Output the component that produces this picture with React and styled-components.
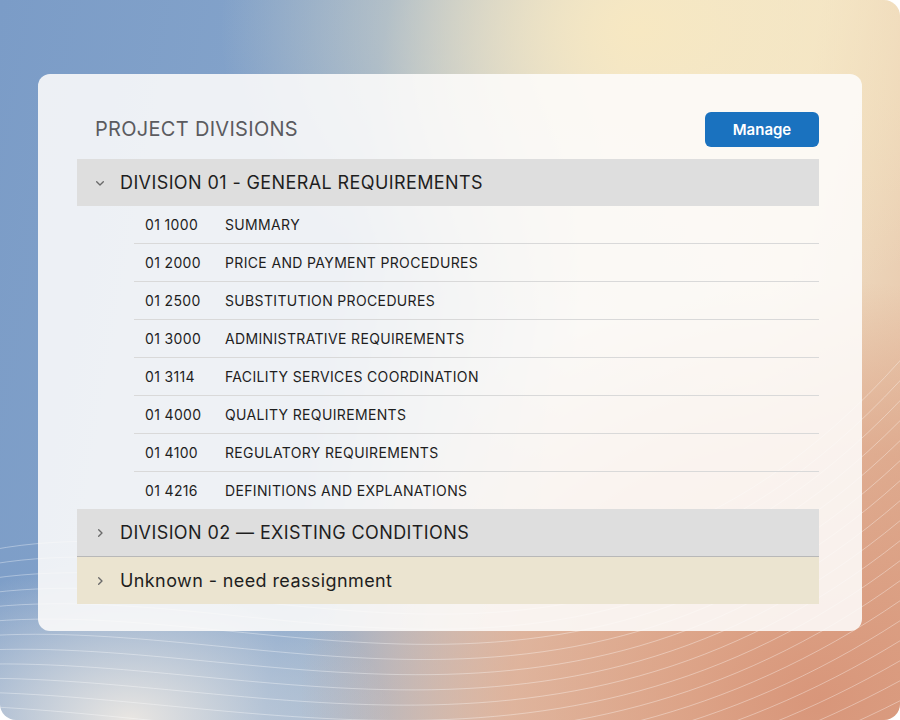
import React from "react";
import styled, { createGlobalStyle } from "styled-components";

const Global = createGlobalStyle`
  html, body { margin: 0; padding: 0; }
  body { font-family: Inter, "Noto Sans", sans-serif; }
`;

const Page = styled.div`
  position: relative;
  width: 900px;
  height: 720px;
  overflow: hidden;
  border-radius: 0 16px 16px 16px;
  background:
    radial-gradient(ellipse 420px 300px at 640px 30px, #f7e8c2 0%, rgba(247,232,194,0) 100%),
    radial-gradient(ellipse 520px 420px at 820px 700px, #d8967a 0%, rgba(216,150,122,0.6) 60%, rgba(216,150,122,0) 100%),
    radial-gradient(ellipse 260px 160px at 130px 720px, #e9e6e2 0%, rgba(233,230,226,0) 100%),
    linear-gradient(100deg, #7b9cc7 0%, #86a5cb 38%, #e9e2d2 62%, #f1e3c8 80%, #e6c2a6 100%);
  padding: 74px 38px 0;
  box-sizing: border-box;
`;

const Waves = styled.svg`
  position: absolute;
  inset: 0;
  pointer-events: none;
`;

const Card = styled.div`
  position: relative;
  height: 557px;
  border-radius: 12px;
  background: rgba(253, 252, 250, 0.88);
  padding: 37px 43px 0 39px;
  box-sizing: border-box;
`;

const Header = styled.div`
  display: flex;
  align-items: center;
  justify-content: space-between;
  padding-left: 18px;
  height: 36px;
  margin-bottom: 12px;
`;

const Title = styled.h2`
  margin: 0;
  font-size: 20px;
  font-weight: 400;
  color: #5b5b5f;
  letter-spacing: 0.3px;
`;

const Button = styled.button`
  width: 114px;
  height: 35px;
  border: none;
  border-radius: 6px;
  background: #1a72bf;
  color: #fff;
  font-family: inherit;
  font-size: 15px;
  font-weight: 600;
`;

const GroupRow = styled.div`
  display: flex;
  align-items: center;
  height: 47px;
  background: ${(p) => p.$bg || "#dedede"};
  border-bottom: ${(p) => (p.$line ? "1px solid #b8b8b8" : "none")};
  color: #1e1e1e;
  font-size: 18px;
  letter-spacing: 0.4px;
  padding-left: 15px;
  gap: 12px;
`;

const Chevron = styled.svg`
  width: 16px;
  height: 16px;
  color: #6a6a6a;
`;

const Item = styled.div`
  display: flex;
  align-items: center;
  height: 37px;
  margin-left: 57px;
  padding-left: 11px;
  font-size: 14px;
  letter-spacing: 0.35px;
  color: #1e1e1e;
  border-bottom: ${(p) => (p.$last ? "none" : "1px solid #d9d9d9")};
`;

const Code = styled.span`
  width: 80px;
`;

const Down = () => (
  <Chevron viewBox="0 0 24 24" fill="none" stroke="currentColor" strokeWidth="2" strokeLinecap="round" strokeLinejoin="round">
    <path d="M7 10l5 5 5-5" />
  </Chevron>
);
const Right = () => (
  <Chevron viewBox="0 0 24 24" fill="none" stroke="currentColor" strokeWidth="2" strokeLinecap="round" strokeLinejoin="round">
    <path d="M10 7l5 5-5 5" />
  </Chevron>
);

const items = [
  ["01 1000", "SUMMARY"],
  ["01 2000", "PRICE AND PAYMENT PROCEDURES"],
  ["01 2500", "SUBSTITUTION PROCEDURES"],
  ["01 3000", "ADMINISTRATIVE REQUIREMENTS"],
  ["01 3114", "FACILITY SERVICES COORDINATION"],
  ["01 4000", "QUALITY REQUIREMENTS"],
  ["01 4100", "REGULATORY REQUIREMENTS"],
  ["01 4216", "DEFINITIONS AND EXPLANATIONS"],
];

const wavePaths = Array.from({ length: 22 }, (_, i) => {
  const o = i * 22;
  return `M${-50} ${560 + o * 0.6} C 250 ${470 + o}, 600 ${760 + o * 0.3}, 950 ${300 + o}`;
});

export default function App() {
  return (
    <>
      <Global />
      <Page>
        <Waves width="900" height="720">
          {wavePaths.map((d, i) => (
            <path key={i} d={d} fill="none" stroke="rgba(255,255,255,0.35)" strokeWidth="1" />
          ))}
        </Waves>
        <Card>
          <Header>
            <Title>PROJECT DIVISIONS</Title>
            <Button>Manage</Button>
          </Header>
          <GroupRow>
            <Down />
            DIVISION 01 - GENERAL REQUIREMENTS
          </GroupRow>
          {items.map(([c, n], i) => (
            <Item key={c} $last={i === items.length - 1}>
              <Code>{c}</Code>
              {n}
            </Item>
          ))}
          <GroupRow $line>
            <Right />
            DIVISION 02 — EXISTING CONDITIONS
          </GroupRow>
          <GroupRow $bg="#ebe4d0">
            <Right />
            Unknown - need reassignment
          </GroupRow>
        </Card>
      </Page>
    </>
  );
}
